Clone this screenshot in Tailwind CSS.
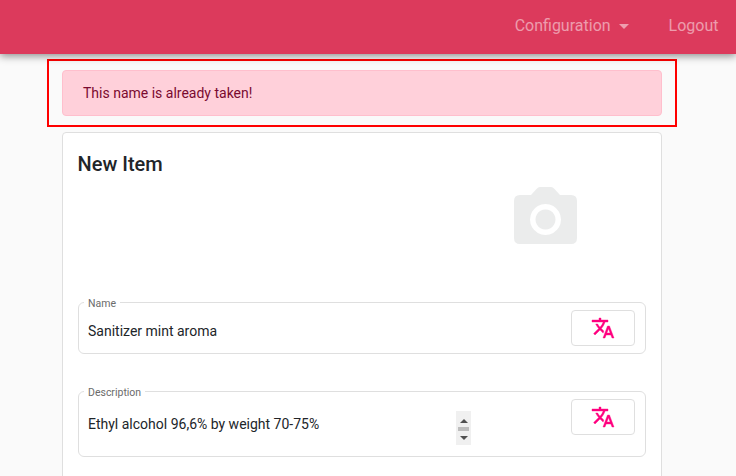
<!DOCTYPE html>
<html lang="en">
<head>
  <meta charset="UTF-8" />
  <title>New Item</title>
  <meta name="viewport" content="width=device-width, initial-scale=1.0" />
  <script src="https://cdn.jsdelivr.net/npm/@tailwindcss/browser@4"></script>
</head>
<body class="bg-[#fafafa] h-[476px] overflow-hidden font-['Roboto',sans-serif] text-[14px] text-[#212529]">

  <!-- Navbar -->
  <nav class="h-[54px] bg-[#dc3a5c] shadow-[0_2px_8px_rgba(0,0,0,0.45)] flex items-center justify-end pr-[17.500px] pb-[2px] text-[16px] text-white/50 relative">
    <a class="flex items-center">Configuration<span class="ml-[8px] border-x-[5px] border-t-[5px] border-x-transparent border-t-white/50"></span></a>
    <a class="ml-[40px]">Logout</a>
  </nav>

  <!-- Alert, with the red frame round it -->
  <div class="ml-[47px] mt-[5px] w-[630px] border-2 border-[#ff0000] px-[13px] py-[9px]">
    <div class="h-[46px] bg-[#ffd0da] border border-[#ffbfcd] rounded-[4px] text-[#7a0a30] flex items-center pl-[20px]">This name is already taken!</div>
  </div>

  <!-- Card -->
  <div class="ml-[62px] mt-[5px] w-[600px] h-[400px] bg-white border border-[#dfdfdf] rounded-[4px] px-[15px] pt-[15px]">
    <h2 class="text-[20px] leading-[32px] font-medium -ml-[0.500px]">New Item</h2>

    <div class="flex justify-end pr-[69px] mt-[7px] h-[111px]">
      <svg class="w-[63px] h-[57px]" viewBox="0 0 63 57">
        <path fill="#ebecec" fill-rule="evenodd" d="M6 8h11L23 1.500Q24 0 26 0H37Q39 0 40 1.500L46 8h11q6 0 6 6v37q0 6-6 6H6q-6 0-6-6V14q0-6 6-6ZM31.500 17a15.500 15.500 0 1 0 .01 0ZM31.500 22.500a10 10 0 1 1-.01 0Z" />
      </svg>
    </div>

    <fieldset class="mt-[-3px] h-[59px] border border-[#dfdfdf] rounded-[6px] pl-[9px] pr-[10px] flex items-start">
      <legend class="ml-[-4px] px-[4px] text-[10.500px] leading-[14px] text-[#6b6b6b] translate-y-[2px]">Name</legend>
      <div class="flex w-full items-start justify-between">
        <span class="leading-[36px] mt-[4px]">Sanitizer mint aroma</span>
        <button class="w-[64px] h-[36px] mt-[1px] bg-white border border-[#dfdfdf] rounded-[4px] flex items-center justify-center">
          <svg class="w-[24px] h-[24px]" viewBox="0 0 24 24" fill="#ff007f" stroke="#ff007f" stroke-width="0.400"><path d="M12.870 15.070l-2.540-2.510.030-.030c1.740-1.940 2.980-4.170 3.710-6.530H17V4h-7V2H8v2H1v1.990h11.170C11.500 7.920 10.440 9.750 9 11.350 8.070 10.320 7.300 9.190 6.690 8h-2c.730 1.630 1.730 3.170 2.980 4.560l-5.090 5.020L4 19l5-5 3.110 3.110.760-2.040zM18.500 10h-2L12 22h2l1.120-3h4.750L21 22h2l-4.500-12zm-2.620 7l1.620-4.330L19.120 17h-3.240z" /></svg>
        </button>
      </div>
    </fieldset>

    <fieldset class="mt-[30px] h-[73px] border border-[#dfdfdf] rounded-[6px] pl-[9px] pr-[10px] flex items-start">
      <legend class="ml-[-4px] px-[4px] text-[10.500px] leading-[14px] text-[#6b6b6b] translate-y-[2px]">Description</legend>
      <div class="flex w-full items-start justify-between mt-[1px]">
        <span class="leading-[20px] mt-[15px]">Ethyl alcohol 96,6% by weight 70-75%</span>
        <div class="flex items-start">
          <!-- textarea spinner -->
          <div class="w-[15px] h-[34px] bg-[#f0f0f0] mt-[12px] mr-[100px] flex flex-col items-center pt-[8px]">
            <span class="border-x-[4px] border-b-[4px] border-x-transparent border-b-[#505050]"></span>
            <span class="w-[11px] h-[4px] bg-[#bdbdbd] mt-[4px]"></span>
            <span class="border-x-[4px] border-t-[4px] border-x-transparent border-t-[#505050] mt-[5px]"></span>
          </div>
          <button class="w-[64px] h-[36px] bg-white border border-[#dfdfdf] rounded-[4px] flex items-center justify-center">
            <svg class="w-[24px] h-[24px]" viewBox="0 0 24 24" fill="#ff007f" stroke="#ff007f" stroke-width="0.400"><path d="M12.870 15.070l-2.540-2.510.030-.030c1.740-1.940 2.980-4.170 3.710-6.530H17V4h-7V2H8v2H1v1.990h11.170C11.500 7.920 10.440 9.750 9 11.350 8.070 10.320 7.300 9.190 6.690 8h-2c.730 1.630 1.730 3.170 2.980 4.560l-5.090 5.020L4 19l5-5 3.110 3.110.760-2.040zM18.500 10h-2L12 22h2l1.120-3h4.750L21 22h2l-4.500-12zm-2.620 7l1.620-4.330L19.120 17h-3.240z" /></svg>
          </button>
        </div>
      </div>
    </fieldset>
  </div>

</body>
</html>
